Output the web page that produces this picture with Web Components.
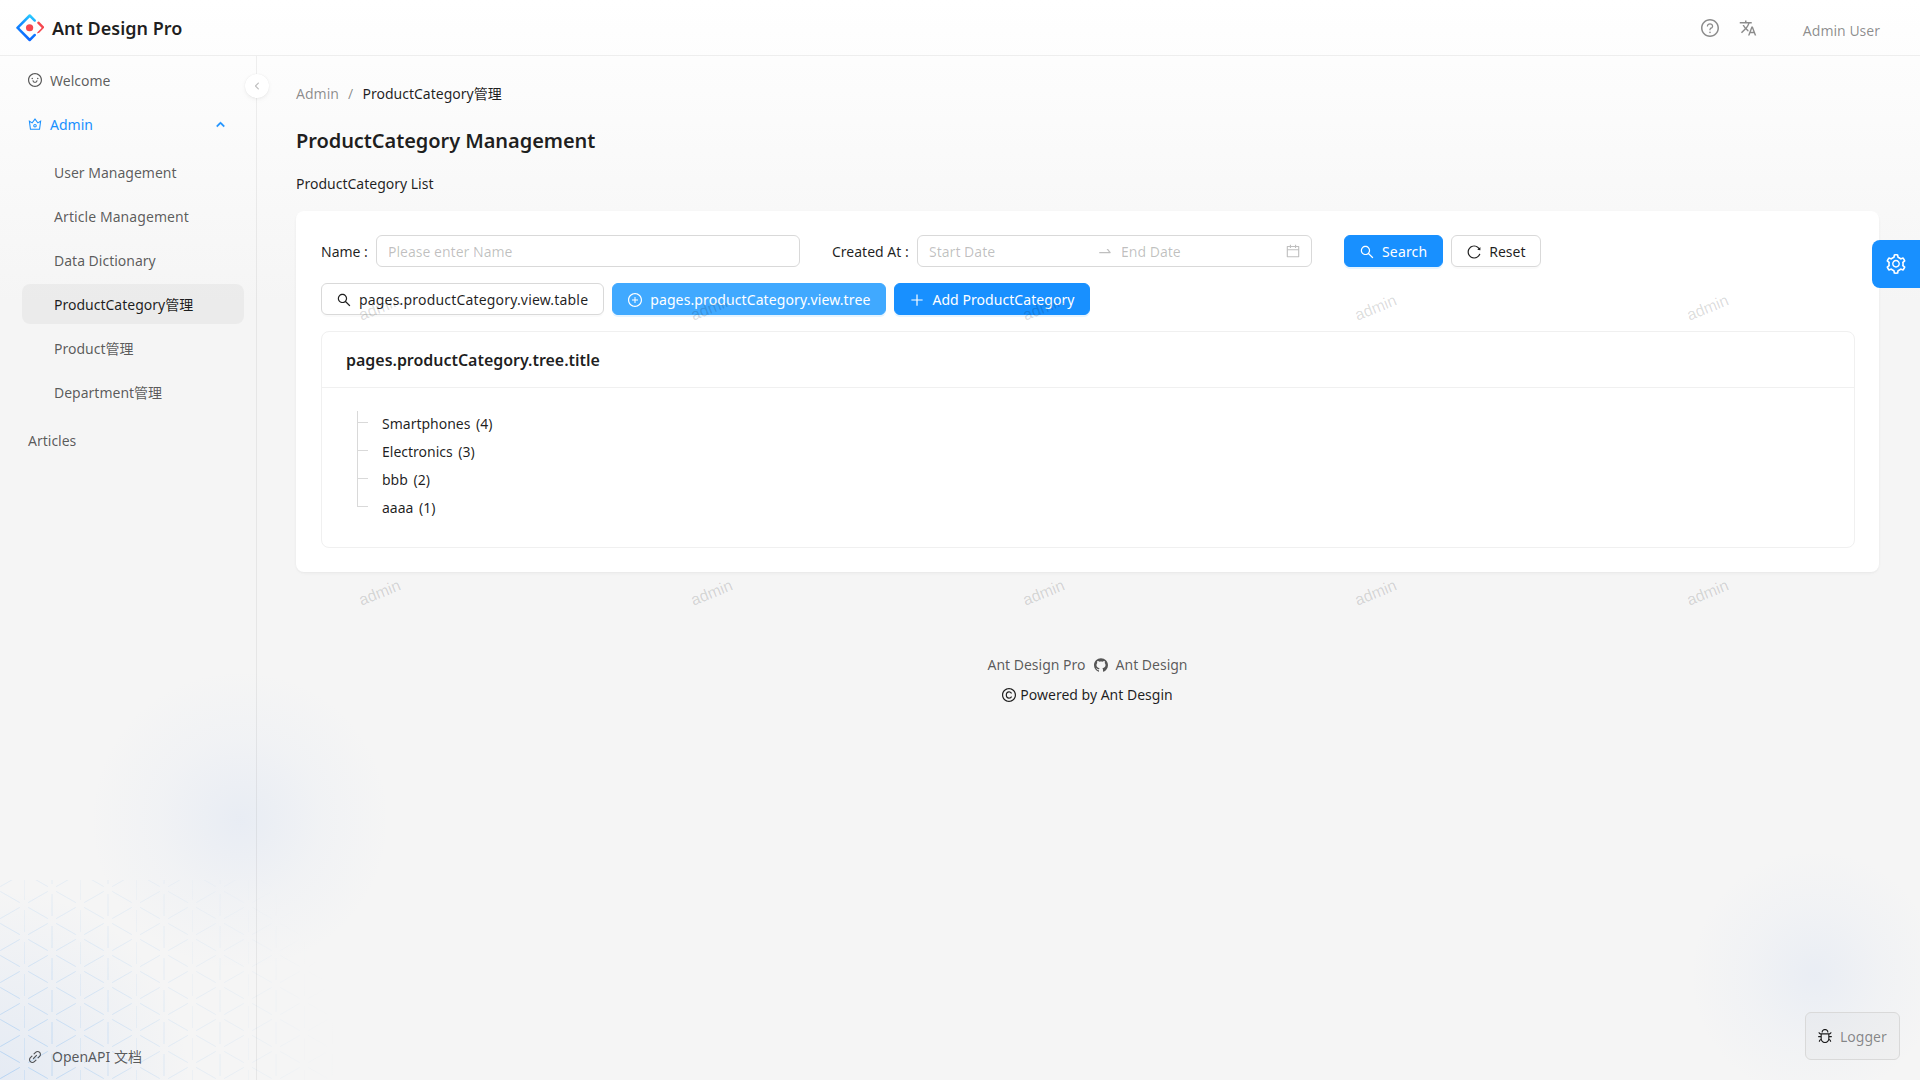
<!DOCTYPE html>
<html lang="en"><head><meta charset="utf-8"><title>ProductCategory Management</title>
<style>
html,body{margin:0;padding:0;height:100%;overflow:hidden}
body{font:14px/22px "Noto Sans","Noto Sans CJK SC",sans-serif;color:rgba(0,0,0,.88);background:#f5f5f5}
</style></head><body>
<app-shell>
  <app-header slot="header"></app-header>
  <side-nav slot="side">
    <nav-item icon="smile">Welcome</nav-item>
    <nav-item icon="crown" active chevron>Admin</nav-item>
    <nav-item sub first>User Management</nav-item>
    <nav-item sub style="letter-spacing:.08px">Article Management</nav-item>
    <nav-item sub>Data Dictionary</nav-item>
    <nav-item sub selected>ProductCategory管理</nav-item>
    <nav-item sub>Product管理</nav-item>
    <nav-item sub>Department管理</nav-item>
    <nav-item top>Articles</nav-item>
    <span slot="foot">OpenAPI 文档</span>
  </side-nav>
  <page-main slot="main">
    <page-head crumb="Admin" current="ProductCategory管理" heading="ProductCategory Management" sub="ProductCategory List"></page-head>
    <content-card>
      <search-form></search-form>
      <view-toolbar></view-toolbar>
      <tree-card heading="pages.productCategory.tree.title">
        <tree-row first>Smartphones (4)</tree-row>
        <tree-row>Electronics (3)</tree-row>
        <tree-row>bbb (2)</tree-row>
        <tree-row last>aaaa (1)</tree-row>
      </tree-card>
    </content-card>
    <page-foot></page-foot>
    <water-mark></water-mark>
  </page-main>
  <collapse-toggle slot="float"></collapse-toggle>
  <settings-tab slot="float"></settings-tab>
  <logger-chip slot="float"></logger-chip>
</app-shell>
<script>
const OUT='M512 64C264.6 64 64 264.6 64 512s200.6 448 448 448 448-200.6 448-448S759.4 64 512 64zm0 820c-205.4 0-372-166.6-372-372s166.6-372 372-372 372 166.6 372 372-166.6 372-372 372z';
const ICONS={
 search:'M909.6 854.5L649.9 594.8C690.2 542.7 712 479 712 412.3c0-79.8-31.2-154.7-87.6-211.1-56.4-56.4-131.4-87.6-211.1-87.6s-154.8 31.3-211.1 87.6C145.9 257.5 114.7 332.5 114.7 412.3c0 79.7 31.2 154.7 87.5 211 56.4 56.4 131.3 87.6 211.1 87.6 66.7 0 130.3-21.8 182.4-62l259.7 259.6a8.2 8.2 0 0 0 11.6 0l43.6-43.5a8.2 8.2 0 0 0 0-11.6zM570.4 570.4C528 612.7 471.8 636 412 636s-116-23.3-158.4-65.6C211.3 528 188 471.8 188 412s23.3-116.1 65.6-158.4C296 211.3 352.2 188 412 188s116.1 23.2 158.4 65.6S636 352.2 636 412s-23.3 116.1-65.6 158.4z',
 plus:'M482 152h60q8 0 8 8v704q0 8-8 8h-60q-8 0-8-8V160q0-8 8-8zM160 474h704q8 0 8 8v60q0 8-8 8H160q-8 0-8-8v-60q0-8 8-8z',
 pluscircle:'M696 480H544V328c0-4.4-3.6-8-8-8h-48c-4.4 0-8 3.6-8 8v152H328c-4.4 0-8 3.6-8 8v48c0 4.4 3.6 8 8 8h152v152c0 4.4 3.6 8 8 8h48c4.4 0 8-3.6 8-8V544h152c4.4 0 8-3.6 8-8v-48c0-4.4-3.6-8-8-8z'+OUT,
 question:OUT+'M623.6 316.7C593.6 290.4 554 276 512 276s-81.6 14.5-111.6 40.7C369.2 344 352 380.7 352 420v7.6c0 4.4 3.6 8 8 8h48c4.4 0 8-3.6 8-8V420c0-44.1 43.1-80 96-80s96 35.9 96 80c0 31.1-22 59.6-56.1 72.7-21.2 8.1-39.2 22.3-52.1 40.9-13.1 19-19.9 41.8-19.9 64.9V620c0 4.4 3.6 8 8 8h48c4.4 0 8-3.6 8-8v-22.7a48.3 48.3 0 0 1 30.9-44.8c59-22.7 97.1-74.7 97.1-132.5.1-39.3-17.1-76-48.3-103.3zM472 732a40 40 0 1 0 80 0 40 40 0 1 0-80 0z',
 smile:'M288 421a48 48 0 1 0 96 0 48 48 0 1 0-96 0zm352 0a48 48 0 1 0 96 0 48 48 0 1 0-96 0z'+OUT+'M664 533h-48.1c-4.2 0-7.8 3.2-8.1 7.4C604 589.9 562.5 629 512 629s-92.1-39.1-95.8-88.6c-.3-4.2-3.9-7.4-8.1-7.4H360a8 8 0 0 0-8 8.4c4.4 84.3 74.5 151.6 160 151.6s155.6-67.3 160-151.6a8 8 0 0 0-8-8.4z',
 crown:'M899.6 276.5L705 396.4 518.4 147.5a8.06 8.06 0 0 0-12.9 0L319 396.4 124.3 276.5c-5.7-3.5-13.1 1.2-12.2 7.9L188.5 865c1.1 7.9 7.9 14 16 14h615.1c8 0 14.9-6 15.9-14l76.4-580.6c.8-6.7-6.5-11.4-12.3-7.9zm-126 534.1H250.3l-53.8-409.4 139.8 86.1L512 252.9l175.7 234.4 139.8-86.1-53.9 409.4zM512 509c-62.1 0-112.6 50.5-112.6 112.6S449.9 734.2 512 734.2s112.6-50.5 112.6-112.6S574.1 509 512 509zm0 160.9c-26.6 0-48.2-21.6-48.2-48.3 0-26.6 21.6-48.3 48.2-48.3s48.2 21.6 48.2 48.3c0 26.6-21.6 48.3-48.2 48.3z',
 link:'M574 665.4a8.03 8.03 0 0 0-11.3 0L446.5 781.6c-53.8 53.8-144.6 59.5-204 0-59.5-59.5-53.8-150.2 0-204l116.2-116.2c3.1-3.1 3.1-8.2 0-11.3l-39.8-39.8a8.03 8.03 0 0 0-11.3 0L191.4 526.5c-84.6 84.6-84.6 221.5 0 306s221.5 84.6 306 0l116.2-116.2c3.1-3.1 3.1-8.2 0-11.3L574 665.4zm258.6-474c-84.6-84.6-221.5-84.6-306 0L410.3 307.6a8.03 8.03 0 0 0 0 11.3l39.7 39.7c3.1 3.1 8.2 3.1 11.3 0l116.2-116.2c53.8-53.8 144.6-59.5 204 0 59.5 59.5 53.8 150.2 0 204L665.3 562.6a8.03 8.03 0 0 0 0 11.3l39.8 39.8c3.1 3.1 8.2 3.1 11.3 0l116.2-116.2c84.5-84.6 84.5-221.5 0-306.1zM610.1 372.3a8.03 8.03 0 0 0-11.3 0L372.3 598.7a8.03 8.03 0 0 0 0 11.3l39.6 39.6c3.1 3.1 8.2 3.1 11.3 0l226.4-226.4c3.1-3.1 3.1-8.2 0-11.3l-39.5-39.6z',
 reload:'M909.1 209.3l-56.4 44.1C775.8 155.1 656.2 92 521.9 92 290 92 102.3 279.5 102 511.5 101.7 743.7 289.8 932 521.9 932c181.3 0 335.8-115 394.6-276.1 1.5-4.2-.7-8.9-4.9-10.3l-56.7-19.5a8 8 0 0 0-10.1 4.8c-1.8 5-3.8 10-5.9 14.9-17.3 41-42.1 77.8-73.7 109.4A344.77 344.77 0 0 1 655.9 829c-42.3 17.9-87.4 27-133.8 27-46.5 0-91.5-9.1-133.8-27A341.5 341.5 0 0 1 279 755.2a342.16 342.16 0 0 1-73.7-109.4c-17.9-42.4-27-87.4-27-133.9s9.1-91.5 27-133.9c17.3-41 42.1-77.8 73.7-109.4 31.6-31.6 68.4-56.4 109.3-73.8 42.3-17.9 87.4-27 133.8-27 46.5 0 91.5 9.1 133.8 27a341.5 341.5 0 0 1 109.3 73.8c9.9 9.9 19.2 20.4 27.8 31.4l-60.2 47a8 8 0 0 0 3 14.1l175.6 43c5 1.2 9.9-2.6 9.9-7.7l.8-180.9c-.1-6.6-7.8-10.3-13-6.2z',
 calendar:'M880 184H712v-64c0-4.4-3.6-8-8-8h-56c-4.4 0-8 3.6-8 8v64H384v-64c0-4.4-3.6-8-8-8h-56c-4.4 0-8 3.6-8 8v64H144c-17.7 0-32 14.3-32 32v664c0 17.7 14.3 32 32 32h736c17.7 0 32-14.3 32-32V216c0-17.7-14.3-32-32-32zm-40 656H184V460h656v380zM184 392V256h128v48c0 4.4 3.6 8 8 8h56c4.4 0 8-3.6 8-8v-48h256v48c0 4.4 3.6 8 8 8h56c4.4 0 8-3.6 8-8v-48h128v136H184z',
 swap:'M873.1 596.2l-164-208A32 32 0 0 0 684 376h-64.8c-6.7 0-10.4 7.7-6.3 13l144.3 183H152c-4.4 0-8 3.6-8 8v60c0 4.4 3.6 8 8 8h695.9c26.8 0 41.7-30.8 25.2-51.8z',
 setting:'M924.8 625.7l-65.5-56c3.1-19 4.7-38.4 4.7-57.8s-1.6-38.8-4.7-57.8l65.5-56a32.03 32.03 0 0 0 9.3-35.2l-.9-2.6a443.74 443.74 0 0 0-79.7-137.9l-1.8-2.1a32.12 32.12 0 0 0-35.1-9.5l-81.3 28.9c-30-24.6-63.5-44-99.7-57.6l-15.7-85a32.05 32.05 0 0 0-25.8-25.7l-2.7-.5c-52.1-9.4-106.9-9.4-159 0l-2.7.5a32.05 32.05 0 0 0-25.8 25.7l-15.8 85.4a351.86 351.86 0 0 0-99 57.4l-81.9-29.1a32 32 0 0 0-35.1 9.5l-1.8 2.1a446.02 446.02 0 0 0-79.7 137.9l-.9 2.6c-4.5 12.5-.8 26.5 9.3 35.2l66.3 56.6c-3.1 18.8-4.6 38-4.6 57.1 0 19.2 1.5 38.4 4.6 57.1L99 625.5a32.03 32.03 0 0 0-9.3 35.2l.9 2.6c18.1 50.4 44.9 96.9 79.7 137.9l1.8 2.1a32.12 32.12 0 0 0 35.1 9.5l81.9-29.1c29.8 24.5 63.1 43.9 99 57.4l15.8 85.4a32.05 32.05 0 0 0 25.8 25.7l2.7.5a449.4 449.4 0 0 0 159 0l2.7-.5a32.05 32.05 0 0 0 25.8-25.7l15.7-85a350 350 0 0 0 99.7-57.6l81.3 28.9a32 32 0 0 0 35.1-9.5l1.8-2.1c34.8-41.1 61.6-87.5 79.7-137.9l.9-2.6c4.5-12.3.8-26.3-9.3-35zM788.3 465.9c2.5 15.1 3.8 30.6 3.8 46.1s-1.3 31-3.8 46.1l-6.6 40.1 74.7 63.9a370.03 370.03 0 0 1-42.6 73.6L721 702.8l-31.4 25.8c-23.9 19.6-50.5 35-79.3 45.8l-38.1 14.3-17.9 97a377.5 377.5 0 0 1-85 0l-17.9-97.2-37.8-14.5c-28.5-10.8-55-26.2-78.7-45.7l-31.4-25.9-93.4 33.2c-17-22.9-31.2-47.6-42.6-73.6l75.5-64.5-6.5-40c-2.4-14.9-3.7-30.3-3.7-45.5 0-15.3 1.2-30.6 3.7-45.5l6.5-40-75.5-64.5c11.3-26.1 25.6-50.7 42.6-73.6l93.4 33.2 31.4-25.9c23.7-19.5 50.2-34.9 78.7-45.7l37.9-14.3 17.9-97.2c28.1-3.2 56.8-3.2 85 0l17.9 97 38.1 14.3c28.7 10.8 55.4 26.2 79.3 45.8l31.4 25.8 92.8-32.9c17 22.9 31.2 47.6 42.6 73.6L781.8 426l6.5 39.9zM512 326c-97.2 0-176 78.8-176 176s78.8 176 176 176 176-78.8 176-176-78.8-176-176-176zm79.2 255.2A111.6 111.6 0 0 1 512 614c-29.9 0-58-11.7-79.2-32.8A111.6 111.6 0 0 1 400 502c0-29.9 11.7-58 32.8-79.2C454 401.6 482.1 390 512 390c29.9 0 58 11.6 79.2 32.8A111.6 111.6 0 0 1 624 502c0 29.9-11.7 58-32.8 79.2z',
 github:'M511.6 76.3C264.3 76.2 64 276.4 64 523.5 64 718.9 189.3 885 363.8 946c23.5 5.9 19.9-10.8 19.9-22.2v-77.5c-135.7 15.9-141.2-73.9-150.3-88.9C215 726 171.5 718 184.5 703c30.9-15.9 62.4 4 98.9 57.9 26.4 39.1 77.9 32.5 104 26 5.7-23.5 17.9-44.5 34.7-60.8-140.6-25.2-199.2-111-199.2-213 0-49.5 16.3-95 48.3-131.7-20.4-60.5 1.9-112.3 4.9-120 58.1-5.2 118.5 41.6 123.2 45.3 33-8.9 70.7-13.6 112.9-13.6 42.4 0 80.2 4.9 113.5 13.9 11.3-8.6 67.3-48.8 121.3-43.9 2.9 7.7 24.7 58.3 5.5 118 32.4 36.8 48.9 82.7 48.9 132.3 0 102.2-59 188.1-200 212.9a127.5 127.5 0 0 1 38.1 91v112.5c.8 9 0 17.9 15 17.9 177.1-59.7 304.6-227 304.6-424.1 0-247.2-200.4-447.3-447.5-447.3z',
 copyright:OUT+'M512 276c-130 0-210 100-210 236s80 236 210 236c100 0 172-58 196-146h-76c-20 46-62 74-120 74-84 0-134-68-134-164s50-164 134-164c58 0 100 28 120 74h76c-24-88-96-146-196-146z',
 bug:'M304 280h56c4.4 0 8-3.6 8-8 0-28.3 5.9-53.2 17.1-73.5 10.6-19.4 26-34.8 45.4-45.4C450.9 142 475.7 136 504 136h16c28.3 0 53.1 5.9 73.4 17.1 19.4 10.6 34.8 26 45.4 45.4C650 218.9 656 243.7 656 272c0 4.4 3.6 8 8 8h56c4.4 0 8-3.6 8-8 0-40-8.8-76.7-25.9-108.1a184.31 184.31 0 0 0-74-74C596.7 72.8 560 64 520 64h-16c-40 0-76.7 8.8-108.1 25.9a184.31 184.31 0 0 0-74 74C304.8 195.3 296 232 296 272c0 4.4 3.6 8 8 8zM940 512H792V412c76.8 0 139-62.2 139-139 0-4.4-3.6-8-8-8h-60c-4.4 0-8 3.6-8 8a63 63 0 0 1-63 63H232a63 63 0 0 1-63-63c0-4.4-3.6-8-8-8h-60c-4.4 0-8 3.6-8 8 0 76.8 62.2 139 139 139v100H84c-4.4 0-8 3.6-8 8v56c0 4.4 3.6 8 8 8h148v96c0 6.5.2 13 .7 19.3C164.1 728.6 116 796.7 116 876c0 4.4 3.6 8 8 8h56c4.4 0 8-3.6 8-8 0-44.2 23.9-82.9 59.6-103.7a273 273 0 0 0 22.7 49c24.3 41.5 59 76.2 100.5 100.5S460.5 960 512 960s99.7-13.7 141.2-38.2c41.5-24.3 76.2-59 100.5-100.5 8.9-15.1 16.5-31.5 22.7-49C812.1 793.1 836 831.8 836 876c0 4.4 3.6 8 8 8h56c4.4 0 8-3.6 8-8 0-79.3-48.1-147.4-116.7-176.7.4-6.4.7-12.8.7-19.3v-96h148c4.4 0 8-3.6 8-8v-56c0-4.4-3.6-8-8-8zM720 680c0 114.9-93.1 208-208 208s-208-93.1-208-208V412h416v268z'
};
const ARROW='M6.432 7.967a.448.448 0 01-.318.133h-.228a.46.46 0 01-.318-.133L2.488 4.85a.305.305 0 010-.43l.427-.43a.293.293 0 01.42 0L6 6.687l2.665-2.699a.299.299 0 01.426 0l.42.431a.305.305 0 010 .43L6.432 7.967z';
const TRANS='M12.87 15.07l-2.54-2.51.03-.03c1.74-1.94 2.98-4.17 3.71-6.53H17V4h-7V2H8v2H1v1.99h11.17C11.5 7.92 10.44 9.75 9 11.35 8.07 10.32 7.3 9.19 6.69 8h-2c.73 1.63 1.73 3.17 2.98 4.56l-5.09 5.02L4 19l5-5 3.11 3.11.76-2.04zM18.5 10h-2L12 22h2l1.12-3h4.75L21 22h2l-4.5-12zm-2.62 7l1.62-4.33L19.12 17h-3.24z';

function el(name,css,html){
  customElements.define(name,class extends HTMLElement{
    connectedCallback(){
      if(this.shadowRoot)return;
      const s=this.attachShadow({mode:'open'});
      const h=typeof html==='function'?html(this):html;
      s.innerHTML='<style>'+css+'</style>'+h;
    }
  });
}
el('a-icon',':host{display:inline-flex;width:var(--s,14px);height:var(--s,14px);flex:none}svg{width:100%;height:100%;display:block;fill:currentColor}',
  h=>`<svg viewBox="64 64 896 896"><path d="${ICONS[h.getAttribute('name')]}"/></svg>`);

el('a-button',`:host{display:inline-flex}
  div{box-sizing:border-box;height:32px;display:flex;align-items:center;gap:8px;padding:1px 15px 0;border-radius:6px;border:1px solid #d9d9d9;background:#fff;color:rgba(0,0,0,.88);box-shadow:0 2px 0 rgba(0,0,0,.02);white-space:nowrap;letter-spacing:var(--ls,0)}
  :host([primary]) div{background:#1890ff;border-color:#1890ff;color:#fff;box-shadow:0 2px 0 rgba(5,145,255,.1)}
  :host([light]) div{background:#40a9ff;border-color:#40a9ff;color:#fff;box-shadow:0 2px 0 rgba(5,145,255,.1)}`,
  h=>`<div><a-icon name="${h.getAttribute('icon')}"></a-icon><slot></slot></div>`);

el('app-shell',`:host{display:grid;grid-template-columns:257px 1fr;grid-template-rows:56px 1fr;height:100vh;position:relative;overflow:hidden;background:linear-gradient(#fff,#f5f5f5 302px)}
  .bg{position:absolute;inset:0;pointer-events:none;background:
    radial-gradient(circle 150px at 240px 820px,rgba(140,175,235,.12),rgba(140,175,235,.04) 55%,rgba(140,175,235,0) 100%),
    radial-gradient(circle 125px at 1815px 975px,rgba(140,175,235,.11),rgba(140,175,235,.04) 55%,rgba(140,175,235,0) 100%),
    radial-gradient(circle 190px at 0 1080px,rgba(120,165,235,.13),rgba(120,165,235,0) 100%)}
  .bg svg{position:absolute;left:0;bottom:0;display:block}
  ::slotted(*){position:relative}
  ::slotted(app-header){grid-column:1/3}
  `,
  `<div class="bg"><svg width="340" height="200" viewBox="0 0 340 200">
    <defs>
      <pattern id="tri" x="24" y="-7" width="56" height="64" patternUnits="userSpaceOnUse">
        <path fill="none" stroke="#6fb1f2" stroke-width="1" d="M0 5V27M0 37V59M28 21V43M28 53V64M28 0V11M4.2 2.4L23.8 13.6M4.2 29.6L23.8 18.4M4.2 34.4L23.8 45.6M4.2 61.6L23.8 50.4M32.2 13.6L51.8 2.4M32.2 18.4L51.8 29.6M32.2 45.6L51.8 34.4M32.2 50.4L51.8 61.6"/>
      </pattern>
      <radialGradient id="fade" gradientUnits="userSpaceOnUse" cx="0" cy="200" r="340">
        <stop offset="0" stop-color="#fff" stop-opacity=".4"/><stop offset=".5" stop-color="#fff" stop-opacity=".14"/><stop offset="1" stop-color="#fff" stop-opacity="0"/>
      </radialGradient>
      <mask id="m"><rect width="340" height="200" fill="url(#fade)"/></mask>
    </defs>
    <rect width="340" height="200" fill="url(#tri)" mask="url(#m)"/>
  </svg></div>
  <slot name="header"></slot><slot name="side"></slot><slot name="main"></slot><slot name="float"></slot>`);

el('app-header',`:host{display:flex;align-items:center;box-sizing:border-box;height:56px;border-bottom:1px solid rgba(0,0,0,.06);padding:0 0 0 16px}
  .logo{display:flex;align-items:center;gap:8px;font-size:18px;font-weight:600;color:rgba(0,0,0,.88)}
  svg{display:block}
  .r{margin-left:auto;display:flex;align-items:center;color:rgba(0,0,0,.45)}
  .q{--s:18px;margin-right:20px}
  .t{width:18px;height:18px;fill:currentColor}
  .u{margin-left:46px;margin-right:40px;margin-top:6px}`,
  `<div class="logo"><svg width="28" height="28" viewBox="0 0 200 200"><defs>
    <linearGradient id="lg1" x1="62%" y1="0%" x2="40%" y2="100%"><stop offset="0" stop-color="#29cdff"/><stop offset=".38" stop-color="#148eff"/><stop offset="1" stop-color="#0a60ff"/></linearGradient></defs>
    <path fill="url(#lg1)" d="M91.7 4.3 3.9 92.1a8.6 8.6 0 0 0 0 12.2l87.8 87.8a8.6 8.6 0 0 0 12.2 0l36.9-36.9a9 9 0 0 0-12.6-12.6l-27 27a4 4 0 0 1-5.6 0L27 101a4 4 0 0 1 0-5.6l68.4-68.4a4 4 0 0 1 5.6 0l27 27a9 9 0 0 0 12.6-12.6L103.9 4.3a8.6 8.6 0 0 0-12.2 0z"/>
    <path fill="#f5474f" d="M153.2 142.3a9 9 0 0 1 0-12.6l28-28a4 4 0 0 0 0-5.6l-28-28a9 9 0 0 1 12.6-12.6l33 33a8.6 8.6 0 0 1 0 12.2l-33 32.6a9 9 0 0 1-12.6-.0z"/>
    <ellipse cx="97" cy="98" rx="26" ry="25" fill="#f5474f"/></svg><span>Ant Design Pro</span></div>
   <div class="r"><a-icon class="q" name="question"></a-icon><svg class="t" viewBox="0 0 24 24"><path d="${TRANS}"/></svg><span class="u">Admin User</span></div>`);

el('side-nav',`:host{display:flex;flex-direction:column;box-sizing:border-box;border-right:1px solid rgba(0,0,0,.06);padding:4px 12px 0 22px;height:1024px}
  .m{display:flex;flex-direction:column;gap:4px;flex:1}
  .f{display:flex;align-items:center;gap:10px;height:46px;padding:0 0 0 6px;color:rgba(0,0,0,.65)}
  a-icon{color:rgba(0,0,0,.65)}`,
  `<div class="m"><slot></slot></div><div class="f"><a-icon name="link"></a-icon><slot name="foot"></slot></div>`);

el('nav-item',`:host{display:flex;align-items:center;box-sizing:border-box;height:40px;padding-left:6px;border-radius:8px;color:rgba(0,0,0,.65)}
  :host([active]){color:#1890ff}
  :host([sub]){padding-left:32px}
  :host([first]){margin-top:4px}
  :host([selected]){background:rgba(0,0,0,.04);color:rgba(0,0,0,.88)}
  :host([top]){margin-top:4px}
  a-icon{margin-right:8px}
  span{padding-top:2px}
  .c{margin-left:auto;margin-right:17px;width:13px;height:13px;fill:currentColor;stroke:currentColor;stroke-width:.5;transform:rotate(180deg)}`,
  h=>`${h.hasAttribute('icon')?`<a-icon name="${h.getAttribute('icon')}"></a-icon>`:''}<span><slot></slot></span>${h.hasAttribute('chevron')?`<svg class="c" viewBox="0 0 12 12"><path d="${ARROW}"/></svg>`:''}`);

el('page-main',`:host{display:flex;flex-direction:column;padding:0 41px 0 39px;position:relative;overflow:hidden;min-width:0}`,`<slot></slot>`);

el('page-head',`:host{display:block;padding-top:27px;margin-bottom:16px}
  .b{display:flex;gap:9.2px;height:22px;color:rgba(0,0,0,.45)}
  .b b{font-weight:400;color:rgba(0,0,0,.88)}
  h1{margin:22px 0 0;font-size:20px;line-height:28px;font-weight:600;letter-spacing:-.07px;color:rgba(0,0,0,.88)}
  p{margin:18px 0 0;line-height:22px;color:rgba(0,0,0,.88)}`,
  h=>`<div class="b"><span>${h.getAttribute('crumb')}</span><span>/</span><b>${h.getAttribute('current')}</b></div><h1>${h.getAttribute('heading')}</h1><p>${h.getAttribute('sub')}</p>`);

el('content-card',`:host{display:flex;flex-direction:column;gap:16px;background:#fff;border-radius:8px;padding:24px 24px 24px 25px;box-shadow:0 1px 2px rgba(0,0,0,.03),0 1px 6px -1px rgba(0,0,0,.02),0 2px 4px rgba(0,0,0,.02)}`,`<slot></slot>`);

el('search-form',`:host{display:flex;align-items:center;gap:32px;height:32px}
  .g{display:flex;align-items:center;justify-content:space-between;gap:8px}
  .g1{width:479px}.g2{width:480px}
  label{white-space:nowrap;color:rgba(0,0,0,.88);padding-top:2px}
  .box{box-sizing:border-box;height:32px;display:flex;align-items:center;background:#fff;border:1px solid #d9d9d9;border-radius:6px;padding:0 11px;color:rgba(0,0,0,.25)}
  .box span{padding-top:2px}
  .n{width:424px}.d{width:395px}
  .d span:nth-child(1){width:169px}
  .d a-icon.sw{margin-right:9px;width:14px}
  .d a-icon.cal{margin-left:auto;color:rgba(0,0,0,.25)}
  .bt{display:flex;gap:8px}`,
  `<div class="g g1"><label>Name :</label><div class="box n"><span>Please enter Name</span></div></div>
   <div class="g g2"><label>Created At :</label><div class="box d"><span>Start Date</span><a-icon class="sw" name="swap"></a-icon><span>End Date</span><a-icon class="cal" name="calendar"></a-icon></div></div>
   <div class="bt"><a-button primary icon="search" style="--ls:.15px">Search</a-button><a-button icon="reload">Reset</a-button></div>`);

el('view-toolbar',`:host{display:flex;gap:8px;height:32px}`,
  `<a-button icon="search" style="--ls:.18px">pages.productCategory.view.table</a-button><a-button light icon="pluscircle" style="--ls:.11px">pages.productCategory.view.tree</a-button><a-button primary icon="plus" style="--ls:.06px">Add ProductCategory</a-button>`);

el('tree-card',`:host{display:block;border:1px solid #f0f0f0;border-radius:8px;background:transparent}
  .h{box-sizing:border-box;height:56px;padding:0 24px;display:flex;align-items:center;font-size:16px;font-weight:600;letter-spacing:-.03px;border-bottom:1px solid #f0f0f0;color:rgba(0,0,0,.88)}
  .b{padding:21px 24px 26px 36px;display:flex;flex-direction:column;position:relative}`,
  h=>`<div class="h">${h.getAttribute('heading')}</div><div class="b"><slot></slot></div>`);

el('tree-row',`:host{display:flex;align-items:center;height:28px;position:relative;padding-left:24px;color:rgba(0,0,0,.88);word-spacing:2px}
  span{padding-top:2px}
  .v{position:absolute;left:-1px;top:0;bottom:0;border-left:1px solid #d9d9d9}
  :host([first]) .v{top:2px}
  :host([last]) .v{bottom:14px}
  .h{position:absolute;left:-1px;top:13px;width:11px;border-top:1px solid #d9d9d9}`,
  `<i class="v"></i><i class="h"></i><span><slot></slot></span>`);

el('page-foot',`:host{display:flex;flex-direction:column;align-items:center;margin-top:82px;color:rgba(0,0,0,.65)}
  .a{display:flex;align-items:center;gap:8px;height:22px}
  .c{display:flex;align-items:center;gap:4px;height:22px;margin-top:8px;color:rgba(0,0,0,.88)}
  a-icon{--s:14px}`,
  `<div class="a"><span>Ant Design Pro</span><a-icon name="github"></a-icon><span>Ant Design</span></div><div class="c"><a-icon name="copyright"></a-icon><span>Powered by Ant Desgin</span></div>`);

el('water-mark',`:host{position:absolute;left:-43px;top:0;width:1700px;height:549px;overflow:hidden;pointer-events:none;z-index:1;display:grid;grid-template-columns:repeat(5,332px);grid-template-rows:repeat(2,32px);row-gap:253px;padding-top:236px;box-sizing:border-box;
    clip-path:polygon(evenodd,0 0,100% 0,100% 100%,0 100%,0 0,107px 227px,876px 227px,876px 247px,107px 247px,107px 227px,0 0)}
  span{justify-self:center;align-self:center;font:16px "Liberation Sans",sans-serif;color:rgba(0,0,0,.15);transform:rotate(-22deg)}`,
  `${'<span>admin</span>'.repeat(10)}`);

el('collapse-toggle',`:host{position:absolute!important;left:245px;top:74px;width:24px;height:24px;border-radius:50%;background:#fff;box-shadow:0 2px 8px -2px rgba(0,0,0,.05),0 1px 4px -1px rgba(25,15,15,.07),0 0 1px rgba(0,0,0,.08);display:flex;align-items:center;justify-content:center;color:rgba(0,0,0,.25)}
  svg{width:12px;height:12px;fill:currentColor;transform:rotate(90deg)}`,`<svg viewBox="0 0 12 12"><path d="${ARROW}"/></svg>`);

el('settings-tab',`:host{position:absolute!important;right:0;top:240px;width:48px;height:48px;background:#1890ff;border-radius:8px 0 0 8px;display:flex;align-items:center;justify-content:center;color:#fff;--s:20px;z-index:3}`,`<a-icon name="setting"></a-icon>`);

el('logger-chip',`:host{position:absolute!important;right:20px;bottom:20px;box-sizing:border-box;width:95px;height:48px;border:1px solid #d9d9d9;border-radius:6px;background:rgba(0,0,0,.02);display:flex;align-items:center;gap:8px;padding-left:12px;color:rgba(0,0,0,.45);font-size:14px}
  span{padding-top:1px}
  a-icon{color:rgba(0,0,0,.88)}`,`<a-icon name="bug"></a-icon><span>Logger</span>`);
</script>
</body></html>
